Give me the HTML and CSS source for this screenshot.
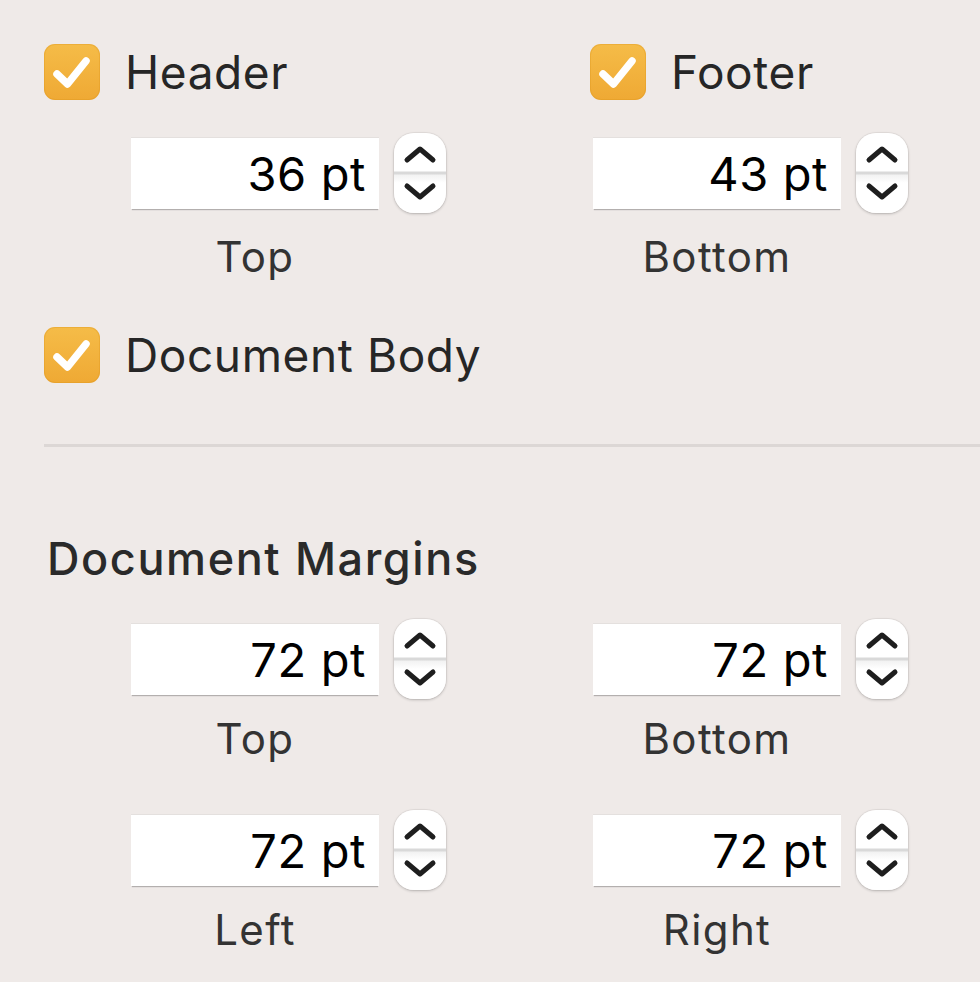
FILE: index.html
```html
<!DOCTYPE html>
<html lang="en">
<head>
    <meta charset="UTF-8">
    <meta name="viewport" content="width=device-width, initial-scale=1.0">
    <title>Header &amp; Footer</title>
    <link rel="stylesheet" href="styles.css">
</head>
<body>
    <div class="panel">
        <div class="check-row">
            <label class="check">
                <span class="box"><svg viewBox="0 0 56 56"><path d="M13 30 L23.5 40 L42 17"/></svg></span>
                Header
            </label>
            <label class="check">
                <span class="box"><svg viewBox="0 0 56 56"><path d="M13 30 L23.5 40 L42 17"/></svg></span>
                Footer
            </label>
        </div>

        <div class="field-row">
            <div class="field">
                <div class="spin">
                    <input class="value" type="text" value="36 pt">
                    <span class="stepper"><svg viewBox="0 0 52 80"><path d="M13 27 L26 16 L39 27"/><path d="M13 53 L26 64 L39 53"/></svg></span>
                </div>
                <div class="caption">Top</div>
            </div>
            <div class="field">
                <div class="spin">
                    <input class="value" type="text" value="43 pt">
                    <span class="stepper"><svg viewBox="0 0 52 80"><path d="M13 27 L26 16 L39 27"/><path d="M13 53 L26 64 L39 53"/></svg></span>
                </div>
                <div class="caption">Bottom</div>
            </div>
        </div>

        <div class="check-row body-row">
            <label class="check">
                <span class="box"><svg viewBox="0 0 56 56"><path d="M13 30 L23.5 40 L42 17"/></svg></span>
                Document Body
            </label>
        </div>

        <hr class="divider">

        <h3 class="heading">Document Margins</h3>

        <div class="field-row margins">
            <div class="field">
                <div class="spin">
                    <input class="value" type="text" value="72 pt">
                    <span class="stepper"><svg viewBox="0 0 52 80"><path d="M13 27 L26 16 L39 27"/><path d="M13 53 L26 64 L39 53"/></svg></span>
                </div>
                <div class="caption">Top</div>
            </div>
            <div class="field">
                <div class="spin">
                    <input class="value" type="text" value="72 pt">
                    <span class="stepper"><svg viewBox="0 0 52 80"><path d="M13 27 L26 16 L39 27"/><path d="M13 53 L26 64 L39 53"/></svg></span>
                </div>
                <div class="caption">Bottom</div>
            </div>
        </div>

        <div class="field-row margins second">
            <div class="field">
                <div class="spin">
                    <input class="value" type="text" value="72 pt">
                    <span class="stepper"><svg viewBox="0 0 52 80"><path d="M13 27 L26 16 L39 27"/><path d="M13 53 L26 64 L39 53"/></svg></span>
                </div>
                <div class="caption">Left</div>
            </div>
            <div class="field">
                <div class="spin">
                    <input class="value" type="text" value="72 pt">
                    <span class="stepper"><svg viewBox="0 0 52 80"><path d="M13 27 L26 16 L39 27"/><path d="M13 53 L26 64 L39 53"/></svg></span>
                </div>
                <div class="caption">Right</div>
            </div>
        </div>
    </div>
</body>
</html>
```

FILE: styles.css
```css
body {
    margin: 0;
    background-color: #efeae8;
    font-family: Inter, "Liberation Sans", sans-serif;
    color: #262626;
}
.panel {
    padding: 44px 0 0 44px;
}
.check-row {
    display: grid;
    grid-template-columns: 546px 1fr;
    height: 56px;
}
.body-row {
    margin-top: 46px;
}
.check {
    display: flex;
    align-items: center;
    gap: 25px;
    font-size: 46px;
    line-height: 56px;
    letter-spacing: 0.6px;
}
.box {
    width: 56px;
    height: 56px;
    border-radius: 11px;
    background: linear-gradient(#f5bc48, #efa934);
    box-shadow: inset 0 0 0 1px rgba(220, 150, 30, 0.35);
}
.box svg {
    display: block;
    width: 56px;
    height: 56px;
    fill: none;
    stroke: #ffffff;
    stroke-width: 7.5;
    stroke-linecap: round;
    stroke-linejoin: round;
}
.field-row {
    display: grid;
    grid-template-columns: 462px 1fr;
    margin-top: 33px;
    padding-left: 87px;
}
.field {
    display: flex;
    flex-direction: column;
}
.spin {
    display: flex;
    align-items: center;
    gap: 15px;
    height: 80px;
}
.value {
    width: 248px;
    height: 72px;
    box-sizing: border-box;
    padding: 0 13px 0 0;
    border: none;
    border-top: 1px solid #e4e0de;
    background: #ffffff;
    box-shadow: 0 2px 1px -1px rgba(0, 0, 0, 0.25);
    font-family: Inter, "Liberation Sans", sans-serif;
    font-size: 47px;
    letter-spacing: 0.6px;
    color: #000000;
    text-align: right;
    outline: none;
}
.stepper {
    width: 52px;
    height: 80px;
    border-radius: 20px;
    background: linear-gradient(#ffffff 0, #ffffff 38px, #d9d9d9 39px, #d9d9d9 41px, #f2f2f2 42px, #ffffff 50px);
    box-shadow: 0 1px 3px rgba(0, 0, 0, 0.22), 0 0 0 1px rgba(0, 0, 0, 0.04);
}
.stepper svg {
    display: block;
    width: 52px;
    height: 80px;
    fill: none;
    stroke: #1e1e1e;
    stroke-width: 5;
    stroke-linecap: round;
    stroke-linejoin: round;
}
.caption {
    width: 248px;
    margin-top: 20px;
    font-size: 42px;
    line-height: 48px;
    letter-spacing: 1.4px;
    text-align: center;
    color: #333333;
}
.margins .caption {
    margin-top: 16px;
}
.margins {
    margin-top: 34px;
}
.margins.second {
    margin-top: 47px;
}
.divider {
    margin: 61px 0 0 0;
    height: 3px;
    border: none;
    background: #dcd7d5;
}
.heading {
    margin: 86px 0 0 3px;
    font-size: 45px;
    line-height: 52px;
    font-weight: 500;
    letter-spacing: 1.6px;
    color: #2a2a2a;
}
```
